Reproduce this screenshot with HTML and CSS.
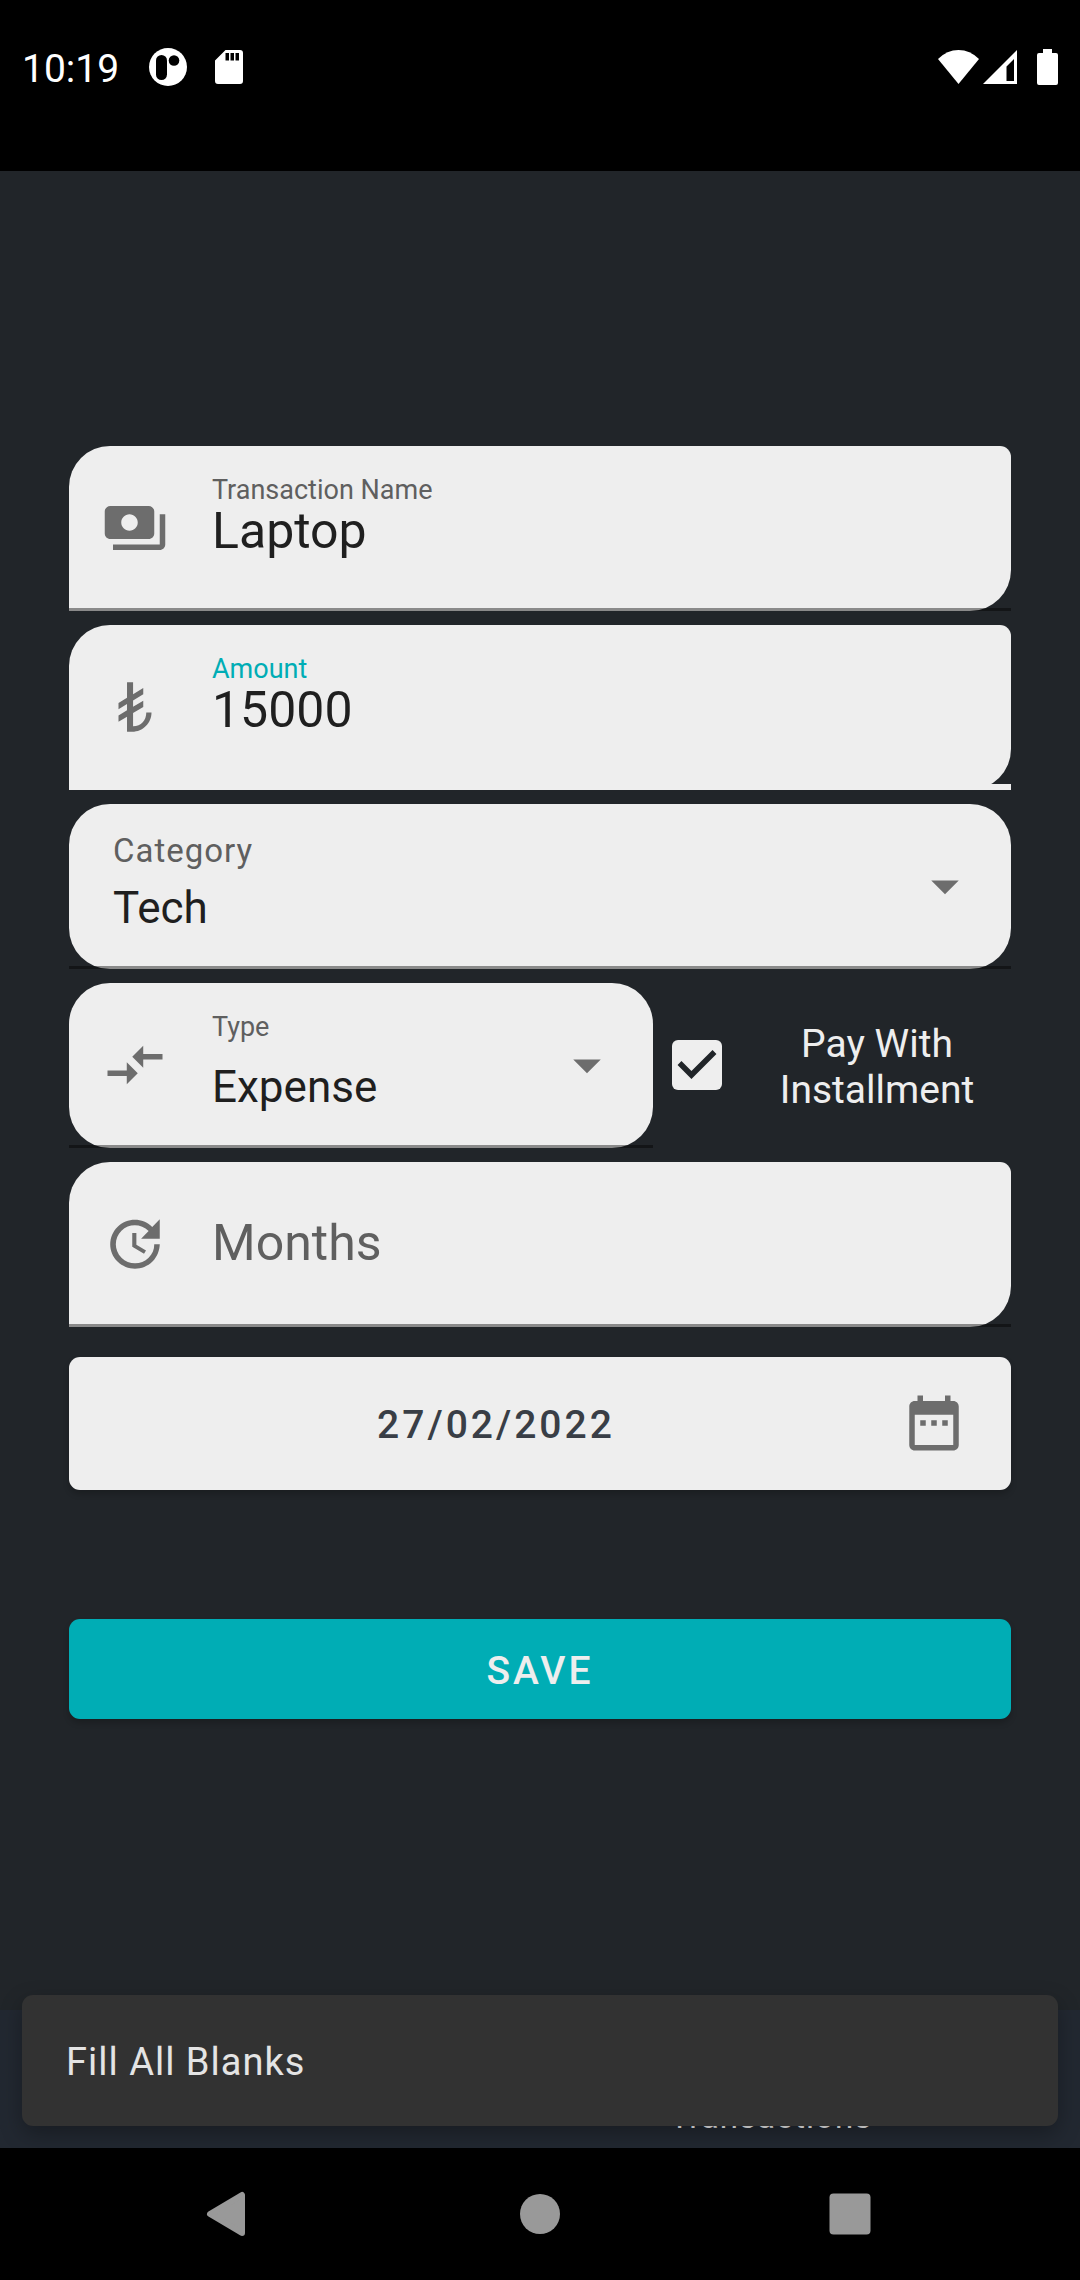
FILE: index.html
```html
<!DOCTYPE html>
<html lang="en">
<head>
<meta charset="utf-8">
<meta name="viewport" content="width=device-width, initial-scale=1">
<title>Add Transaction</title>
<link rel="stylesheet" href="styles.css">
</head>
<body>
<header class="status-bar">
  <div class="status-left">
    <time class="clock">10:19</time>
    <svg class="status-app" width="38" height="38" viewBox="0 0 38 38" aria-hidden="true">
      <circle cx="19" cy="19" r="19" fill="#fff"/>
      <rect x="7" y="7" width="11" height="25" rx="5.5" fill="#000"/>
      <circle cx="25" cy="12.500" r="5.300" fill="#000"/>
    </svg>
    <svg class="status-sd" width="28" height="34" viewBox="0 0 28 34" aria-hidden="true">
      <path fill="#fff" fill-rule="evenodd" d="M10.500 0H25q3 0 3 3v28q0 3-3 3H3q-3 0-3-3V10.500zM10.500 3v7.500h3.500V3zm5 0v7.500h3.500V3zm5 0v7.500H24V3z"/>
    </svg>
  </div>
  <div class="status-right">
    <svg class="status-wifi" width="41" height="34" viewBox="0 0 41 34" aria-hidden="true"><path fill="#fff" d="M0 9Q9 0 20.500 0T41 9L20.500 34z"/></svg>
    <svg width="34" height="34" viewBox="0 0 34 34" aria-hidden="true"><path fill="#fff" fill-rule="evenodd" d="M34 0v34H0zM31 9l-7.500 7.500V31H31z"/></svg>
    <svg class="status-battery" width="21" height="36" viewBox="0 0 21 36" aria-hidden="true"><path fill="#fff" d="M6 0h9v4h4q2 0 2 2v28q0 2-2 2H2q-2 0-2-2V6q0-2 2-2h4z"/></svg>
  </div>
</header>

<main class="content">
  <form class="form">
    <div class="field">
      <svg class="icon" viewBox="0 0 24 24" aria-hidden="true"><path d="M19 14V6c0-1.100-.9-2-2-2H3c-1.100 0-2 .9-2 2v8c0 1.100.9 2 2 2h14c1.100 0 2-.9 2-2zm-9-1c-1.660 0-3-1.340-3-3s1.340-3 3-3 3 1.340 3 3-1.340 3-3 3zm13-6v11c0 1.100-.9 2-2 2H4v-2h17V7h2z"/></svg>
      <div class="field-body">
        <label class="field-label" for="name">Transaction Name</label>
        <input class="field-input" id="name" type="text" value="Laptop">
      </div>
    </div>

    <div class="field field-active">
      <svg class="icon" viewBox="0 0 24 24" aria-hidden="true"><path d="M9.100 3h2.200v4.400L15 5.100v2.300l-3.700 2.200v2.300L15 9.700V12l-3.700 2.200V19c3 0 4.800-2.200 4.800-5H18c0 3.870-3.130 7-7 7H9.100v-5.500L6 17.400v-2.300l3.100-1.900v-2.300L6 12.800v-2.300l3.100-1.900z"/></svg>
      <div class="field-body">
        <label class="field-label" for="amount">Amount</label>
        <input class="field-input" id="amount" type="text" inputmode="numeric" value="15000">
      </div>
    </div>

    <div class="field field-select field-plain">
      <div class="field-body">
        <label class="field-label field-label-large" for="category">Category</label>
        <select class="field-dropdown" id="category"><option>Tech</option></select>
      </div>
      <svg class="icon arrow" viewBox="0 0 24 24" aria-hidden="true"><path d="M7 10l5 5 5-5z"/></svg>
    </div>

    <div class="type-row">
      <div class="field field-select">
        <svg class="icon" viewBox="0 0 24 24" aria-hidden="true"><path d="M9.010 14H2v2h7.010v3L13 15l-3.990-4v3zm5.980-1v-3H22V8h-7.010V5L11 9l3.990 4z"/></svg>
        <div class="field-body">
          <label class="field-label" for="type">Type</label>
          <select class="field-dropdown" id="type"><option>Expense</option></select>
        </div>
        <svg class="icon arrow" viewBox="0 0 24 24" aria-hidden="true"><path d="M7 10l5 5 5-5z"/></svg>
      </div>
      <div class="installment">
        <span class="check">
          <input class="check-input" id="installment" type="checkbox" checked>
          <svg class="check-mark" viewBox="3 3 18 18" aria-hidden="true"><path d="M10 17l-5-5 1.410-1.410L10 14.170l7.590-7.590L19 8z"/></svg>
        </span>
        <label class="check-label" for="installment">Pay With Installment</label>
      </div>
    </div>

    <div class="field">
      <svg class="icon" viewBox="0 0 24 24" aria-hidden="true"><path d="M21 10.120h-6.780l2.740-2.820c-2.730-2.700-7.150-2.800-9.880-.1-2.730 2.710-2.730 7.080 0 9.790s7.150 2.710 9.880 0C18.320 15.650 19 14.080 19 12.100h2c0 1.980-.88 4.550-2.640 6.290-3.510 3.480-9.210 3.480-12.720 0-3.500-3.470-3.530-9.110-.02-12.580s9.140-3.470 12.650 0L21 3v7.120zM12.500 8v4.250l3.500 2.080-.72 1.210L11 13V8h1.500z"/></svg>
      <div class="field-body field-body-empty">
        <input class="field-input" type="text" inputmode="numeric" placeholder="Months" aria-label="Months">
      </div>
    </div>

    <button class="button date-button" type="button">
      <span class="date-text">27/02/2022</span>
      <svg class="icon" viewBox="0 0 24 24" aria-hidden="true"><path d="M9 11H7v2h2v-2zm4 0h-2v2h2v-2zm4 0h-2v2h2v-2zm2-7h-1V2h-2v2H8V2H6v2H5c-1.110 0-1.990.9-1.990 2L3 20c0 1.100.89 2 2 2h14c1.100 0 2-.9 2-2V6c0-1.100-.9-2-2-2zm0 16H5V9h14v11z"/></svg>
    </button>

    <button class="button save-button" type="button">SAVE</button>
  </form>
</main>

<div class="bottom">
  <nav class="tabs">
    <a class="tab" href="#transactions">Transactions</a>
  </nav>
  <div class="snackbar" role="status">Fill All Blanks</div>
</div>

<footer class="system-nav">
  <button class="system-button" type="button" aria-label="Back"><svg width="48" height="48" viewBox="0 0 48 48"><path d="M4 24L36 5v38z" fill="#999" stroke="#999" stroke-width="6" stroke-linejoin="round"/></svg></button>
  <button class="system-button" type="button" aria-label="Home"><svg width="48" height="48" viewBox="0 0 48 48"><circle cx="24" cy="24" r="20" fill="#999"/></svg></button>
  <button class="system-button" type="button" aria-label="Overview"><svg width="48" height="48" viewBox="0 0 48 48"><rect x="3.500" y="3.500" width="41" height="41" rx="4" fill="#999"/></svg></button>
</footer>
</body>
</html>
```
FILE: styles.css
```css
*, *::before, *::after { box-sizing: border-box; }

body {
  margin: 0;
  min-height: 100vh;
  display: flex;
  flex-direction: column;
  background: #212529;
  color: #eee;
  font-family: Roboto, sans-serif;
  font-size: 39px;
}

svg { display: block; flex: none; }
button, input, select { font-family: inherit; }

/* Status bar */
.status-bar {
  display: flex;
  justify-content: space-between;
  padding: 40px 22px 77px;
  background: #000;
  color: #fff;
}
.status-left, .status-right { display: flex; align-items: center; height: 54px; }
.clock { line-height: 54px; padding-top: 4px; }
.status-app { margin-left: 30px; }
.status-sd { margin-left: 28px; }
.status-wifi { margin-right: 4px; }
.status-battery { margin-left: 20px; }

/* Form */
.content { flex: 1; padding: 275px 69px 40px; }
.form { display: flex; flex-direction: column; gap: 14px; }

.field {
  position: relative;
  display: flex;
  align-items: center;
  gap: 44px;
  min-height: 165px;
  padding: 0 33px 1px;
  background: #eee;
  border-radius: 41px 11px 41px 0;
}
.field::after {
  content: "";
  position: absolute;
  inset: auto 0 0;
  height: 3px;
  background: rgba(0, 0, 0, .42);
}
.field-active::after { height: 6px; background: #eee; }
.field-select { border-radius: 41px; }
.field-plain { padding-left: 44px; }

.icon { width: 66px; height: 66px; fill: #6d6d6d; }
.arrow { pointer-events: none; }

.field-body {
  flex: 1;
  min-width: 0;
  align-self: stretch;
  display: flex;
  flex-direction: column;
  padding: 28px 0 34px;
}
.field-select .field-body { justify-content: space-between; margin-right: -110px; }
.field-body-empty { justify-content: center; padding: 0 0 2px; }

.field-label { font-size: 27px; line-height: 32px; color: #5f5f5f; }
.field-label-large { font-size: 33px; line-height: 38px; letter-spacing: 1px; }
.field-active .field-label { color: #00adb5; }

.field-input {
  width: 100%;
  height: 58px;
  padding: 0;
  border: 0;
  outline: 0;
  background: none;
  color: #1f1f1f;
  font-size: 50px;
}
.field-label + .field-input { margin-top: -4px; }
.field-input::placeholder { color: #5f5f5f; opacity: 1; }

.field-dropdown {
  width: 100%;
  height: 52px;
  padding: 0;
  border: 0;
  outline: 0;
  appearance: none;
  background: none;
  color: #1f1f1f;
  font-size: 44px;
}

.type-row { display: grid; grid-template-columns: 31fr 19fr; }

.installment { display: flex; align-items: center; gap: 21px; padding: 0 0 1px 19px; }
.check { display: grid; flex: none; }
.check-input, .check-mark { grid-area: 1 / 1; width: 50px; height: 50px; }
.check-input {
  margin: 0;
  appearance: none;
  background: #eee;
  border-radius: 6px;
}
.check-mark { fill: #212529; pointer-events: none; visibility: hidden; }
.check-input:checked + .check-mark { visibility: visible; }
.check-label { flex: 1; padding-top: 4px; line-height: 46px; text-align: center; }

/* Buttons */
.button {
  display: flex;
  align-items: center;
  width: 100%;
  border: 0;
  border-radius: 11px;
  box-shadow: 0 4px 6px rgba(0, 0, 0, .2);
  font-size: 39px;
  font-weight: 500;
  letter-spacing: 3px;
}
.date-button {
  gap: 22px;
  height: 133px;
  margin-top: 16px;
  padding: 0 44px 1px;
  background: #eee;
  color: #393e46;
}
.date-text { flex: 1; padding-top: 4px; text-align: center; }
.save-button {
  justify-content: center;
  height: 100px;
  margin-top: 115px;
  padding: 3px 44px 0;
  background: #00adb5;
  color: #eee;
}

/* Bottom tabs with the message over them */
.bottom { position: relative; }
.tabs {
  display: grid;
  grid-template-columns: 1fr 1fr;
  align-items: end;
  height: 138px;
  padding: 0 78px;
  background: #222831;
}
.tab {
  grid-column: 2;
  padding-bottom: 11px;
  color: #eee;
  font-size: 33px;
  line-height: 40px;
  letter-spacing: 1px;
  text-align: center;
  text-decoration: none;
}
.snackbar {
  position: absolute;
  inset: auto 22px 22px;
  padding: 44px 44px 41px;
  border-radius: 11px;
  background: #323232;
  box-shadow: 0 8px 22px rgba(0, 0, 0, .3);
  color: #e4e4e4;
  font-size: 38px;
  line-height: 46px;
  letter-spacing: 1px;
}

/* System navigation */
.system-nav {
  position: relative;
  display: flex;
  justify-content: center;
  height: 132px;
  background: #000;
}
.system-button {
  display: flex;
  align-items: center;
  justify-content: center;
  width: 310px;
  padding: 0;
  border: 0;
  background: none;
}
```
